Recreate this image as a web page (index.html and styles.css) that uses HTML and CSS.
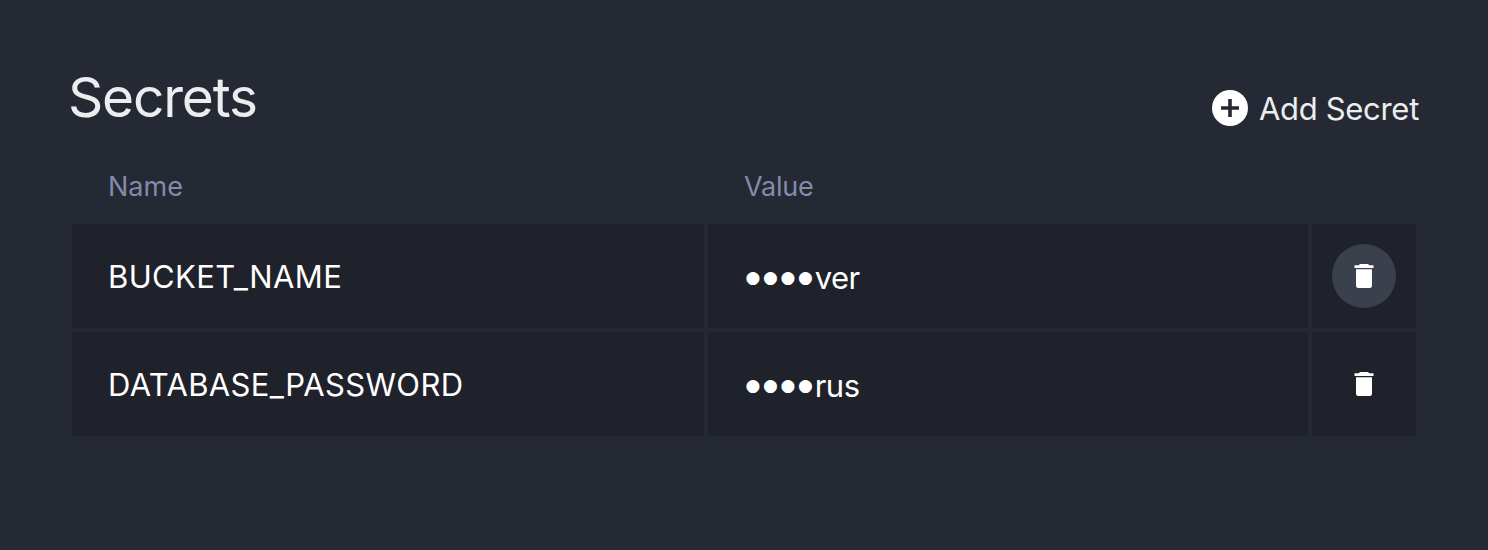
FILE: index.html
```html
<!DOCTYPE html>
<html lang="en">
<head>
<meta charset="utf-8">
<title>Secrets</title>
<link rel="stylesheet" href="styles.css">
</head>
<body>
<main class="panel">
  <header class="panel-header">
    <h1 class="title">Secrets</h1>
    <button class="add" type="button">
      <svg class="add-icon" viewBox="0 0 36 36"><circle cx="18" cy="18" r="18" fill="#fff"/><path d="M18 9v18M9 18h18" stroke="#252933" stroke-width="3.6"/></svg>
      <span class="add-label">Add Secret</span>
    </button>
  </header>
  <div class="grid labels">
    <span class="label">Name</span>
    <span class="label label-value">Value</span>
  </div>
  <div class="grid rows">
    <div class="cell"><span class="name">BUCKET_NAME</span></div>
    <div class="cell"><span class="dots">●●●●</span><span class="tail">ver</span></div>
    <div class="cell action"><button class="trash active" type="button" aria-label="Delete"><svg class="trash-icon" viewBox="0 0 20 24"><path d="M6 0h8l1.200 1.200h4.300V4H.5V1.200h4.300zM2 5.200h16v16.300a2.500 2.500 0 0 1-2.500 2.500h-11A2.500 2.500 0 0 1 2 21.500z" fill="#fff"/></svg></button></div>
    <div class="cell"><span class="name">DATABASE_PASSWORD</span></div>
    <div class="cell"><span class="dots">●●●●</span><span class="tail">rus</span></div>
    <div class="cell action"><button class="trash" type="button" aria-label="Delete"><svg class="trash-icon" viewBox="0 0 20 24"><path d="M6 0h8l1.200 1.200h4.300V4H.5V1.200h4.300zM2 5.200h16v16.300a2.500 2.500 0 0 1-2.500 2.500h-11A2.500 2.500 0 0 1 2 21.500z" fill="#fff"/></svg></button></div>
  </div>
</main>
</body>
</html>
```

FILE: styles.css
```css
* { box-sizing: border-box; }
body {
  margin: 0;
  background: #252933;
  color: #fff;
  font-family: Inter, "Liberation Sans", sans-serif;
}
button { border: 0; padding: 0; background: none; color: inherit; font: inherit; }
.panel { height: 550px; padding: 64px 72px 0; }
.panel-header { display: flex; justify-content: space-between; height: 104px; }
.title {
  margin: 1px 0 0 -4px;
  font-size: 55px;
  font-weight: 400;
  line-height: 65px;
  letter-spacing: -1.2px;
  color: #ebedef;
}
.add { display: flex; align-items: center; gap: 12px; height: 36px; margin: 26px -3px 0 0; }
.add-icon { width: 36px; height: 36px; }
.add-label { margin-left: -1px; padding-top: 2px; font-size: 31px; line-height: 36px; letter-spacing: -0.3px; color: #ebedef; white-space: nowrap; }
.grid { display: grid; grid-template-columns: 632px 600px 104px; gap: 4px; }
.labels { height: 56px; }
.label { padding-left: 36px; font-size: 27px; line-height: 38px; color: #818cab; }
.label-value { letter-spacing: -0.2px; }
.cell { display: flex; align-items: center; height: 104px; padding: 2px 0 0 36px; background: #20222b; font-size: 31px; line-height: 40px; }
.name { letter-spacing: 0.35px; }
.tail { padding-top: 1px; letter-spacing: -0.5px; }
.action { justify-content: center; padding: 0; }
.dots { padding-left: 1.5px; font-family: "DejaVu Sans", sans-serif; font-size: 17px; letter-spacing: 2.7px; margin-right: -1px; }
.trash { display: flex; align-items: center; justify-content: center; width: 64px; height: 64px; border-radius: 50%; }
.active { background: #3b404d; }
.trash-icon { width: 20px; height: 24px; }
```
